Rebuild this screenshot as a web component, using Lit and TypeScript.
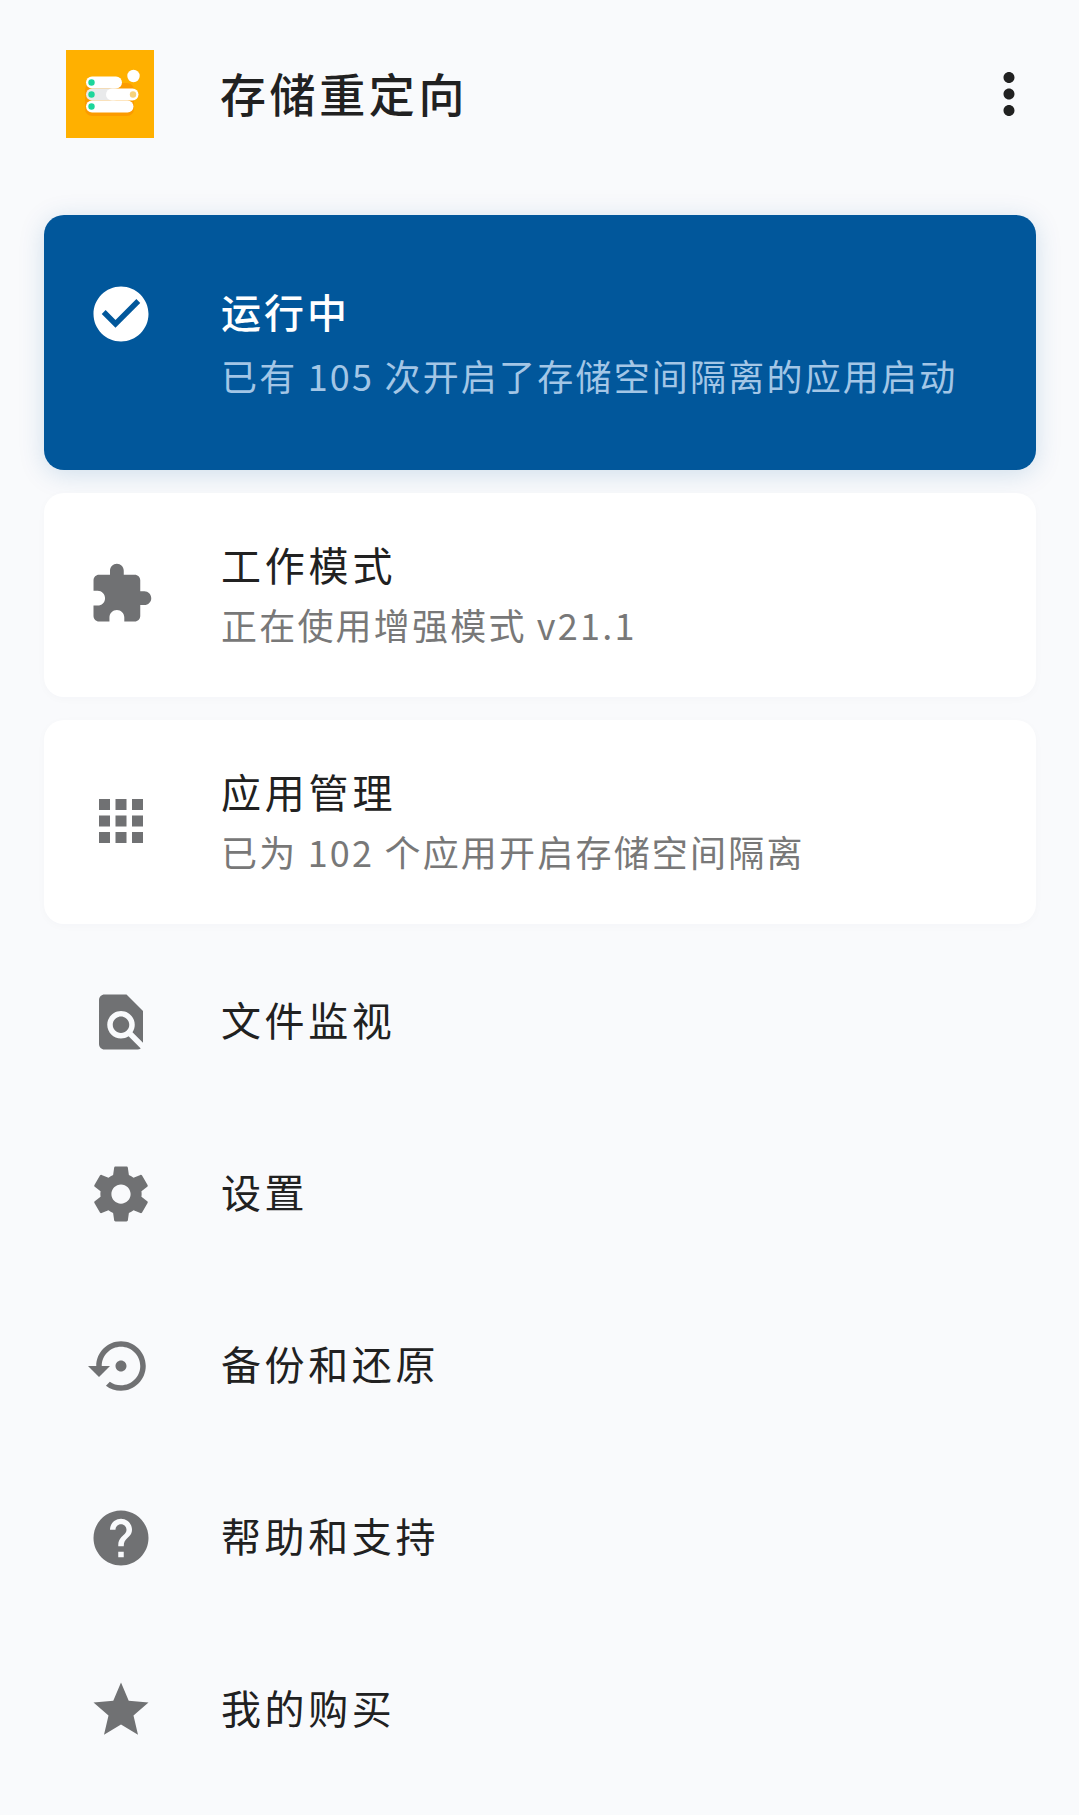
import { LitElement, html, css, svg } from "lit";
import { customElement } from "lit/decorators.js";

const P: Record<string, string> = {
  more: "M12 8c1.1 0 2-.9 2-2s-.9-2-2-2-2 .9-2 2 .9 2 2 2zm0 2c-1.1 0-2 .9-2 2s.9 2 2 2 2-.9 2-2-.9-2-2-2zm0 6c-1.1 0-2 .9-2 2s.9 2 2 2 2-.9 2-2-.9-2-2-2z",
  check: "M12 2C6.48 2 2 6.48 2 12s4.48 10 10 10 10-4.48 10-10S17.52 2 12 2zm-2 15l-5-5 1.41-1.41L10 14.17l7.59-7.59L19 8l-9 9z",
  ext: "M20.5 11H19V7c0-1.1-.9-2-2-2h-4V3.5C13 2.12 11.88 1 10.5 1S8 2.12 8 3.5V5H4c-1.1 0-1.99.9-1.99 2v3.8H3.5c1.49 0 2.7 1.21 2.7 2.7s-1.21 2.7-2.7 2.7H2V20c0 1.1.9 2 2 2h3.8v-1.5c0-1.49 1.21-2.7 2.7-2.7 1.49 0 2.7 1.21 2.7 2.7V22H17c1.1 0 2-.9 2-2v-4h1.5c1.38 0 2.5-1.12 2.5-2.5S21.88 11 20.5 11z",
  apps: "M4 8h4V4H4v4zm6 12h4v-4h-4v4zm-6 0h4v-4H4v4zm0-6h4v-4H4v4zm6 0h4v-4h-4v4zm6-10v4h4V4h-4zm-6 4h4V4h-4v4zm6 6h4v-4h-4v4zm0 6h4v-4h-4v4z",
  find: "M20 19.59V8l-6-6H6c-1.1 0-1.99.9-1.99 2L4 20c0 1.1.89 2 1.99 2H18c.45 0 .85-.15 1.19-.39l-4.43-4.43c-.8.52-1.74.82-2.76.82-2.76 0-5-2.24-5-5s2.24-5 5-5 5 2.24 5 5c0 1.02-.3 1.96-.82 2.76L20 19.59zM9 13c0 1.66 1.34 3 3 3s3-1.34 3-3-1.34-3-3-3-3 1.34-3 3z",
  gear: "M19.43 12.98c.04-.32.07-.64.07-.98s-.03-.66-.07-.98l2.11-1.65c.19-.15.24-.42.12-.64l-2-3.46c-.12-.22-.39-.3-.61-.22l-2.49 1c-.52-.4-1.08-.73-1.69-.98l-.38-2.65C14.46 2.18 14.25 2 14 2h-4c-.25 0-.46.18-.49.42l-.38 2.65c-.61.25-1.17.59-1.69.98l-2.49-1c-.23-.09-.49 0-.61.22l-2 3.46c-.13.22-.07.49.12.64l2.11 1.65c-.04.32-.07.65-.07.98s.03.66.07.98l-2.11 1.65c-.19.15-.24.42-.12.64l2 3.46c.12.22.39.3.61.22l2.49-1c.52.4 1.08.73 1.69.98l.38 2.65c.03.24.24.42.49.42h4c.25 0 .46-.18.49-.42l.38-2.65c.61-.25 1.17-.59 1.69-.98l2.49 1c.23.09.49 0 .61-.22l2-3.46c.12-.22.07-.49-.12-.64l-2.11-1.65zM12 15.5c-1.93 0-3.5-1.57-3.5-3.5s1.57-3.5 3.5-3.5 3.5 1.57 3.5 3.5-1.57 3.5-3.5 3.5z",
  restore: "M14 12c0-1.1-.9-2-2-2s-2 .9-2 2 .9 2 2 2 2-.9 2-2zm-2-9c-4.97 0-9 4.03-9 9H0l4 4 4-4H5c0-3.87 3.13-7 7-7s7 3.13 7 7-3.13 7-7 7c-1.51 0-2.91-.49-4.06-1.3l-1.42 1.44C8.04 20.3 9.94 21 12 21c4.97 0 9-4.03 9-9s-4.03-9-9-9z",
  help: "M12 2C6.48 2 2 6.48 2 12s4.48 10 10 10 10-4.48 10-10S17.52 2 12 2zm1 17h-2v-2h2v2zm2.07-7.75l-.9.92C13.45 12.9 13 13.5 13 15h-2v-.5c0-1.1.45-2.1 1.17-2.83l1.24-1.26c.37-.36.59-.86.59-1.41 0-1.1-.9-2-2-2s-2 .9-2 2H8c0-2.21 1.79-4 4-4s4 1.79 4 4c0 .88-.36 1.68-.93 2.25z",
  star: "M12 17.27L18.18 21l-1.64-7.03L22 9.24l-7.19-.61L12 2 9.19 8.63 2 9.24l5.46 4.73L5.82 21z",
};

const icon = (name: string) => html`<svg class="icon" viewBox="0 0 24 24"><path d=${P[name]}></path></svg>`;

const logo = html`<svg class="logo" viewBox="0 0 88 88">
  <rect width="88" height="88" fill="#ffb000"></rect>
  ${svg`
  <rect x="19" y="33" width="49" height="33" rx="7" fill="#f57c00" opacity=".4"></rect>
  <rect x="20" y="26.5" width="36" height="12" rx="6" fill="#fff"></rect>
  <rect x="20" y="38.5" width="34" height="12" rx="6" fill="#e9eaeb"></rect>
  <rect x="20" y="50.5" width="47.5" height="12" rx="6" fill="#fff"></rect>
  <rect x="40" y="38.5" width="32.5" height="12" rx="6" fill="#fff"></rect>
  <circle cx="25.5" cy="32.5" r="3.2" fill="#1dd69b"></circle>
  <circle cx="25.5" cy="44.5" r="3.2" fill="#1dd69b"></circle>
  <circle cx="25.5" cy="56.5" r="3.2" fill="#1dd69b"></circle>
  <circle cx="67" cy="44.5" r="3.2" fill="#f7d27a"></circle>
  <circle cx="67.5" cy="26" r="6.2" fill="#fff"></circle>`}
</svg>`;

const rows: [string, string][] = [
  ["find", "文件监视"],
  ["gear", "设置"],
  ["restore", "备份和还原"],
  ["help", "帮助和支持"],
  ["star", "我的购买"],
];

@customElement("app-root")
export class AppRoot extends LitElement {
  static styles = css`
    :host {
      display: block;
      width: 1079px;
      height: 1815px;
      overflow: hidden;
      background: #f9fafc;
      font-family: "Noto Sans CJK SC", "Noto Sans", sans-serif;
      color: #212121;
    }
    .header {
      display: flex;
      align-items: center;
      height: 88px;
      padding: 50px 37px 0 66px;
    }
    .logo { width: 88px; height: 88px; flex: none; }
    .title {
      flex: 1;
      margin-left: 66px;
      padding-bottom: 5px;
      font-size: 46px;
      letter-spacing: 3.6px;
      font-weight: 500;
      line-height: 60px;
    }
    .icon { width: 66px; height: 66px; flex: none; fill: #707173; display: block; }
    .more { fill: #212121; }
    .cards {
      display: flex;
      flex-direction: column;
      gap: 22.5px;
      margin: 77px 43px 0 44px;
    }
    .card {
      display: flex;
      align-items: center;
      padding-left: 44px;
      border-radius: 20px;
      background: #fff;
      height: 204.5px;
      box-shadow: 0 2px 10px rgba(30, 60, 100, 0.025);
    }
    .card .icon { margin-bottom: 2px; }
    .card .text { margin-left: 67px; padding-bottom: 6px; }
    .card .t { margin-bottom: 6px; letter-spacing: 3.8px; }
    .primary {
      height: 255px;
      align-items: flex-start;
      background: #01579b;
      box-shadow: 0 4px 26px rgba(1, 87, 155, 0.17);
    }
    .primary .icon { fill: #fff; margin: 66px 0 0; }
    .primary .text { padding-top: 67px; padding-bottom: 0; }
    .t {
      font-size: 40px;
      letter-spacing: 3.6px;
      line-height: 58px;
    }
    .s {
      font-size: 36px;
      letter-spacing: 2.2px;
      line-height: 50px;
      color: #787878;
      white-space: nowrap;
    }
    .primary .t { color: #fff; font-weight: 500; margin-bottom: 0; letter-spacing: 3px; }
    .primary .s { color: #a3c6e6; margin-top: 10px; }
    .list { margin: 12px 0 0 44px; }
    .row {
      display: flex;
      align-items: center;
      height: 172px;
      padding-left: 44px;
    }
    .row .t { margin-left: 67px; padding-bottom: 6px; }
  `;

  render() {
    return html`
      <div class="header">
        ${logo}
        <div class="title">存储重定向</div>
        <svg class="icon more" viewBox="0 0 24 24"><path d=${P.more}></path></svg>
      </div>
      <div class="cards">
        <div class="card primary">
          ${icon("check")}
          <div class="text">
            <div class="t">运行中</div>
            <div class="s">已有 105 次开启了存储空间隔离的应用启动</div>
          </div>
        </div>
        <div class="card">
          ${icon("ext")}
          <div class="text">
            <div class="t">工作模式</div>
            <div class="s">正在使用增强模式 v21.1</div>
          </div>
        </div>
        <div class="card">
          ${icon("apps")}
          <div class="text">
            <div class="t">应用管理</div>
            <div class="s">已为 102 个应用开启存储空间隔离</div>
          </div>
        </div>
      </div>
      <div class="list">
        ${rows.map(([i, t]) => html`<div class="row">${icon(i)}<div class="t">${t}</div></div>`)}
      </div>
    `;
  }
}
